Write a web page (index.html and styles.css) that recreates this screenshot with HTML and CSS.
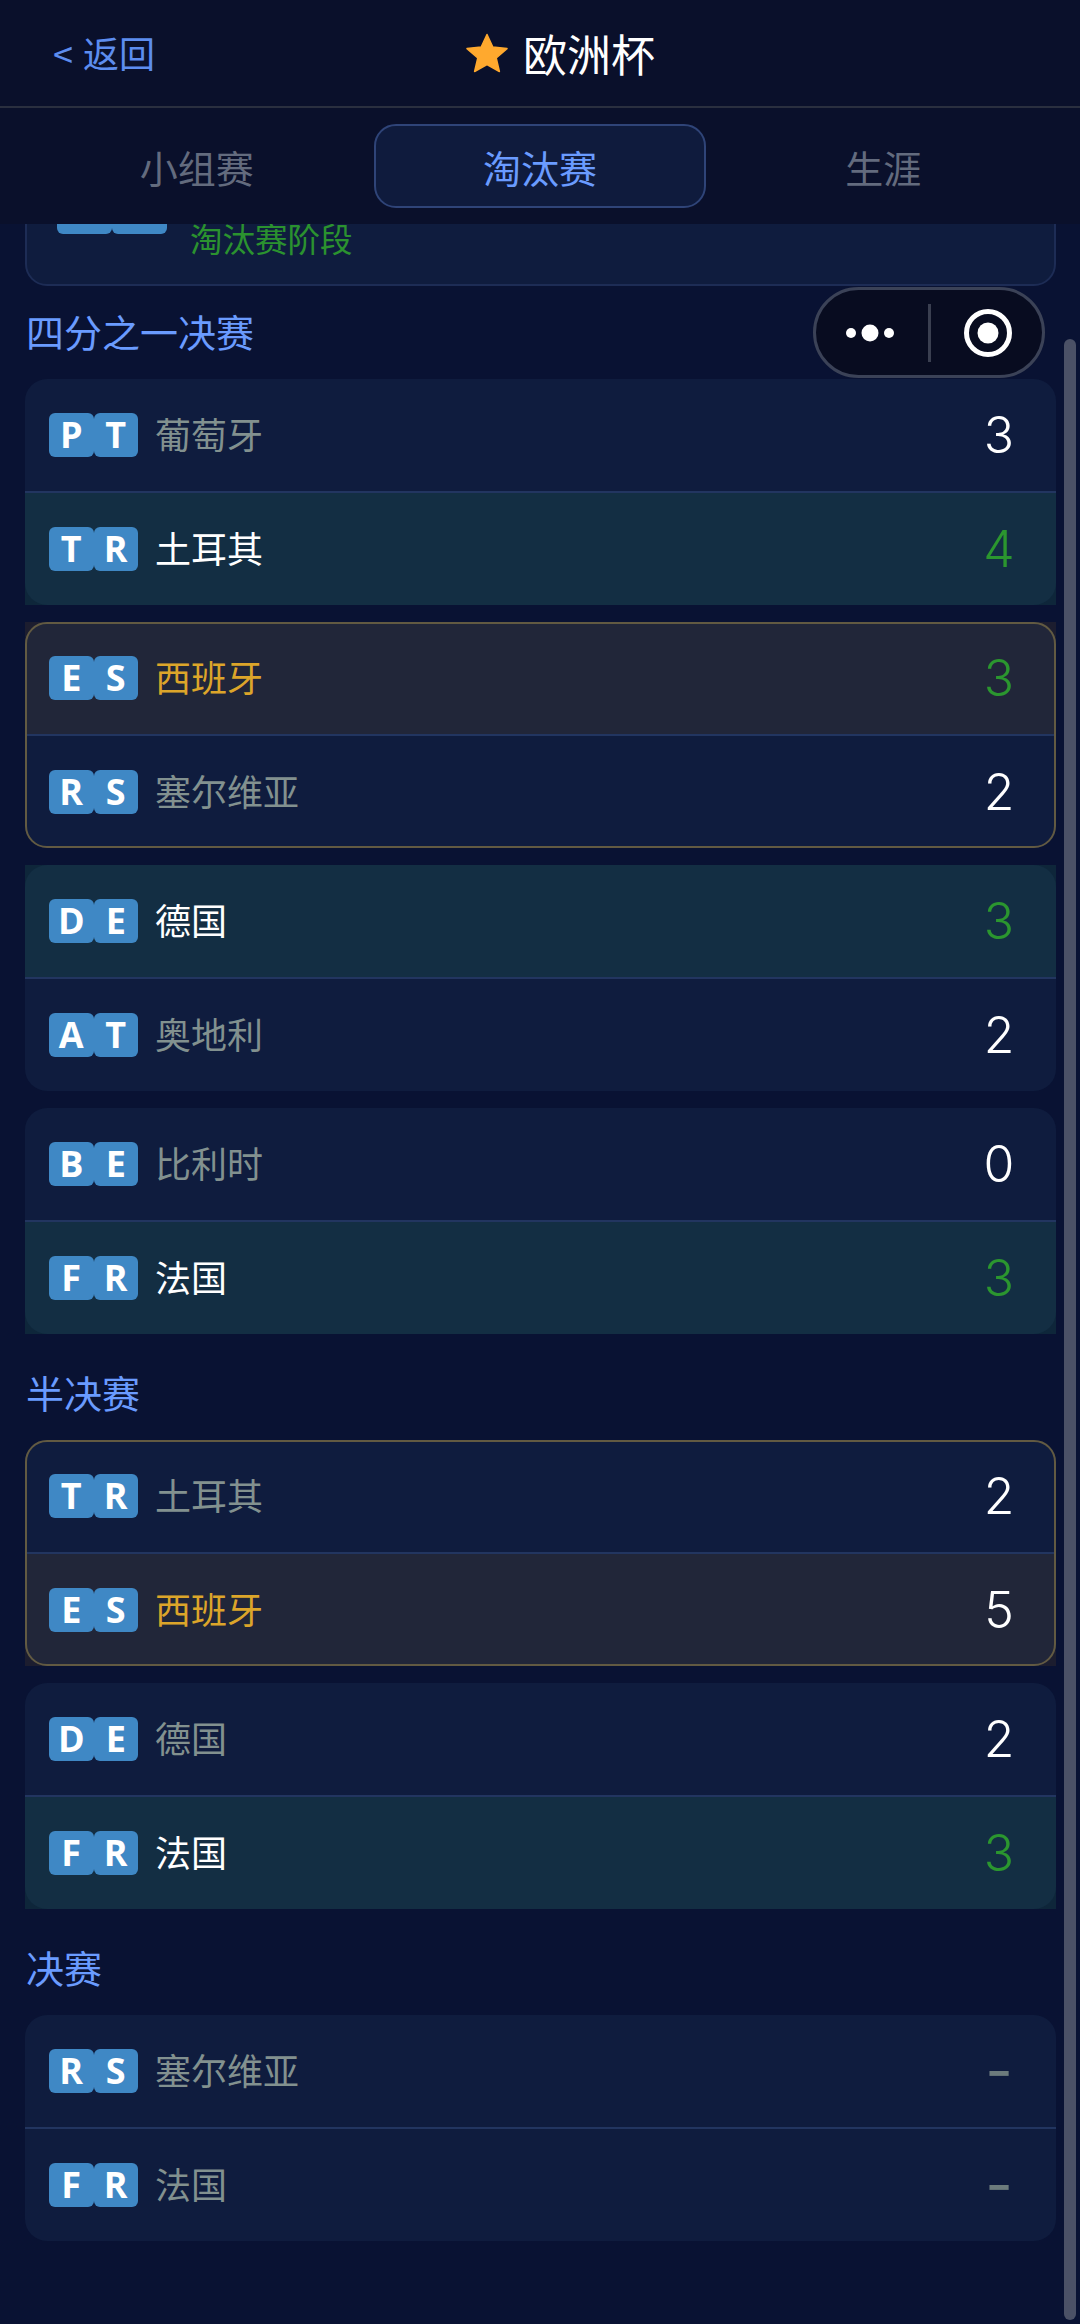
FILE: index.html
```html
<!DOCTYPE html>
<html lang="zh-CN">
<head>
  <meta charset="UTF-8" />
  <meta name="viewport" content="width=device-width, initial-scale=1.0"/>
  <title>欧洲杯</title>
  <link rel="stylesheet" href="styles.css">
</head>
<body>

  <header class="top-bar">
    <div class="back">&lt; 返回</div>
    <div class="page-title">
      <svg class="star" viewBox="0 0 44 40" width="44" height="40">
        <path d="M22 1.5 L27.8 14 L42 15.6 L31.2 25 L34.4 38.5 L22 31.5 L9.6 38.5 L12.8 25 L2 15.6 L16.2 14 Z" fill="#ffa92e" stroke="#ffa92e" stroke-width="1.5" stroke-linejoin="round"/>
      </svg>
      <span>欧洲杯</span>
    </div>
  </header>

  <nav class="tabs">
    <div class="tab">小组赛</div>
    <div class="tab active">淘汰赛</div>
    <div class="tab">生涯</div>
  </nav>

  <main class="content">
    <div class="summary">
      <div class="flag flag-big"><span>E</span><span>U</span></div>
      <div class="summary-stage">淘汰赛阶段</div>
    </div>

    <h2 class="round-title first">四分之一决赛</h2>

    <div class="match">
      <div class="row">
        <div class="flag"><span>P</span><span>T</span></div>
        <div class="name">葡萄牙</div>
        <div class="score">3</div>
      </div>
      <div class="row winner">
        <div class="flag"><span>T</span><span>R</span></div>
        <div class="name">土耳其</div>
        <div class="score">4</div>
      </div>
    </div>

    <div class="match picked">
      <div class="row fav winner-score">
        <div class="flag"><span>E</span><span>S</span></div>
        <div class="name">西班牙</div>
        <div class="score">3</div>
      </div>
      <div class="row">
        <div class="flag"><span>R</span><span>S</span></div>
        <div class="name">塞尔维亚</div>
        <div class="score">2</div>
      </div>
    </div>

    <div class="match">
      <div class="row winner">
        <div class="flag"><span>D</span><span>E</span></div>
        <div class="name">德国</div>
        <div class="score">3</div>
      </div>
      <div class="row">
        <div class="flag"><span>A</span><span>T</span></div>
        <div class="name">奥地利</div>
        <div class="score">2</div>
      </div>
    </div>

    <div class="match">
      <div class="row">
        <div class="flag"><span>B</span><span>E</span></div>
        <div class="name">比利时</div>
        <div class="score">0</div>
      </div>
      <div class="row winner">
        <div class="flag"><span>F</span><span>R</span></div>
        <div class="name">法国</div>
        <div class="score">3</div>
      </div>
    </div>

    <h2 class="round-title">半决赛</h2>

    <div class="match picked">
      <div class="row">
        <div class="flag"><span>T</span><span>R</span></div>
        <div class="name">土耳其</div>
        <div class="score">2</div>
      </div>
      <div class="row fav">
        <div class="flag"><span>E</span><span>S</span></div>
        <div class="name">西班牙</div>
        <div class="score">5</div>
      </div>
    </div>

    <div class="match">
      <div class="row">
        <div class="flag"><span>D</span><span>E</span></div>
        <div class="name">德国</div>
        <div class="score">2</div>
      </div>
      <div class="row winner">
        <div class="flag"><span>F</span><span>R</span></div>
        <div class="name">法国</div>
        <div class="score">3</div>
      </div>
    </div>

    <h2 class="round-title">决赛</h2>

    <div class="match">
      <div class="row">
        <div class="flag"><span>R</span><span>S</span></div>
        <div class="name">塞尔维亚</div>
        <div class="score pending">-</div>
      </div>
      <div class="row">
        <div class="flag"><span>F</span><span>R</span></div>
        <div class="name">法国</div>
        <div class="score pending">-</div>
      </div>
    </div>
  </main>

  <div class="capsule">
    <svg viewBox="0 0 232 91" width="232" height="91">
      <circle cx="38" cy="46" r="5" fill="#fff"/>
      <circle cx="57" cy="46" r="8.5" fill="#fff"/>
      <circle cx="76" cy="46" r="5" fill="#fff"/>
      <rect x="115" y="17" width="3" height="58" fill="#3a3f50"/>
      <circle cx="175" cy="46" r="21.5" fill="none" stroke="#fff" stroke-width="5"/>
      <circle cx="175" cy="46" r="10.5" fill="#fff"/>
    </svg>
  </div>

  <div class="scrollbar"></div>

</body>
</html>
```

FILE: styles.css
```css
* {
  box-sizing: border-box;
}

html,
body {
  margin: 0;
  height: 100%;
}

body {
  position: relative;
  display: flex;
  flex-direction: column;
  overflow: hidden;
  font-family: "Noto Sans CJK SC", "Noto Sans", sans-serif;
  background: #091233;
  color: #fff;
}

.top-bar {
  position: relative;
  display: flex;
  align-items: center;
  justify-content: center;
  flex-shrink: 0;
  height: 108px;
  padding-left: 40px;
  background: #0a102b;
  border-bottom: 2px solid #2a2f3f;
}

.back {
  position: absolute;
  left: 53px;
  top: 26px;
  font-size: 36px;
  line-height: 52px;
  word-spacing: 2px;
  color: #5d8def;
}

.page-title {
  display: flex;
  align-items: center;
  gap: 14px;
  font-size: 44px;
  line-height: 60px;
}

.star {
  display: block;
}

.tabs {
  display: flex;
  gap: 12px;
  flex-shrink: 0;
  height: 116px;
  padding: 16px 31px;
  background: #0a102b;
}

.tab {
  flex: 1;
  display: flex;
  align-items: center;
  justify-content: center;
  font-size: 38px;
  color: #636b7e;
  border: 2px solid transparent;
  border-radius: 22px;
}

.tab.active {
  color: #6a9bff;
  background: #0f1b3d;
  border-color: #2f4478;
}

.content {
  flex: 1;
  overflow: hidden;
  padding: 0 24px 0 25px;
}

.summary {
  display: flex;
  align-items: flex-end;
  gap: 23px;
  margin-top: -46px;
  padding: 0 22px 30px 30px;
  background: #0f1c3e;
  border: 2px solid #1d2c55;
  border-radius: 22px;
}

.summary-stage {
  font-size: 32.5px;
  line-height: 32px;
  color: #2b922f;
}

.flag {
  display: flex;
  flex-shrink: 0;
}

.flag span {
  display: flex;
  align-items: center;
  justify-content: center;
  width: 44.5px;
  height: 44px;
  font-family: "Open Sans", sans-serif;
  font-size: 36px;
  font-weight: 700;
  line-height: 44px;
  color: #fff;
  background: #3f88c5;
  border-radius: 6px;
}

.flag-big {
  margin-bottom: 20px;
}

.flag-big span {
  width: 55px;
  height: 54px;
}

.round-title {
  margin: 32px 0 16px;
  padding: 0 0 6px 1px;
  font-size: 38px;
  font-weight: 400;
  line-height: 52px;
  color: #6a9bff;
}

.round-title.first {
  margin-top: 19px;
}

.match {
  margin-bottom: 17px;
  background: #0f1c3e;
  border-radius: 22px;
}

.match.picked {
  outline: 2px solid #625a42;
  outline-offset: -2px;
}

.row {
  display: flex;
  align-items: center;
  height: 112px;
  padding: 0 32px 0 24px;
}

.row:first-child {
  height: 114px;
  border-bottom: 2px solid #223560;
}

.row.winner {
  background: rgba(34, 120, 90, 0.2);
}

.row.fav {
  background: rgba(255, 165, 0, 0.08);
}

.name {
  flex: 1;
  margin-left: 17px;
  padding-bottom: 4px;
  font-size: 36px;
  line-height: 50px;
  color: #82918f;
}

.winner .name {
  color: #fff;
}

.fav .name {
  color: #dca52a;
}

.score {
  width: 50px;
  font-family: Inter, sans-serif;
  font-size: 50px;
  font-weight: 350;
  line-height: 60px;
  text-align: center;
  color: #fff;
}

.winner .score,
.winner-score .score {
  color: #2b962f;
}

.score.pending {
  padding-bottom: 2px;
  font-size: 60px;
  font-weight: 400;
  color: #6c7b7c;
}

.capsule {
  position: absolute;
  left: 813px;
  top: 287px;
  width: 232px;
  height: 91px;
  background: #080c20;
  border: 3px solid #3b4257;
  border-radius: 46px;
}

.capsule svg {
  position: absolute;
  left: -3px;
  top: -3px;
}

.scrollbar {
  position: absolute;
  left: 1064px;
  top: 339px;
  width: 12px;
  height: 1981px;
  background: #4b5166;
  border-radius: 6px;
}
```
